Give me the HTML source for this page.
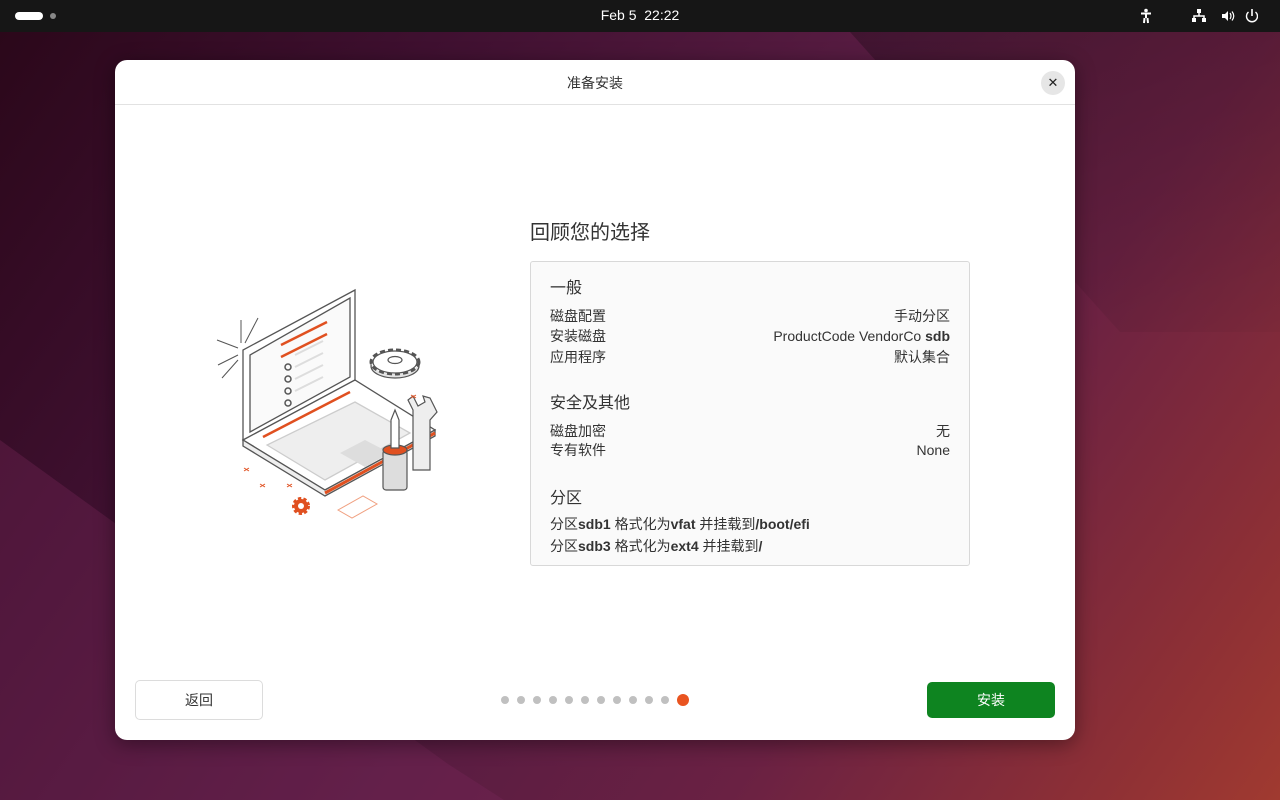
<!DOCTYPE html>
<html><head><meta charset="utf-8"><style>
*{margin:0;padding:0;box-sizing:border-box}
body{width:1280px;height:800px;overflow:hidden;font-family:"Liberation Sans","Noto Sans CJK SC",sans-serif;position:relative;
background:linear-gradient(125deg,#2a0719 0%,#3f1030 25%,#581c42 50%,#6a2143 70%,#8e3035 90%,#a03a30 100%)}
.bg1{position:absolute;left:850px;top:32px;width:600px;height:300px;background:linear-gradient(160deg,rgba(0,0,0,0.25),rgba(0,0,0,0));clip-path:polygon(0 0,100% 0,100% 100%,45% 100%)}
.bg2{position:absolute;left:0;top:440px;width:560px;height:360px;background:rgba(120,40,90,0.35);clip-path:polygon(0 0,80% 90%,90% 100%,0 100%)}
.top{position:absolute;left:0;top:0;width:1280px;height:32px;background:#161616;color:#fff;font-size:14px}
.dlg{position:absolute;left:115px;top:60px;width:960px;height:680px;background:#fff;border-radius:12px;box-shadow:0 4px 20px rgba(0,0,0,.4)}
.hdr{height:45px;border-bottom:1px solid #e2e2e2;text-align:center;line-height:46px;font-size:14px;color:#333}
.close{position:absolute;right:10px;top:11px;width:24px;height:24px;border-radius:12px;background:#e6e6e6;text-align:center;line-height:23px;font-size:13px;color:#222}
h2{position:absolute;left:415px;top:156px;font-size:20px;font-weight:normal;color:#333}
.card{position:absolute;left:415px;top:201px;width:440px;height:305px;background:#fafafa;border:1px solid #d8d8d8;border-radius:3px;padding:0 19px;color:#333;font-size:14px}
.sec{font-size:16px;position:absolute;left:19px}
.row{position:absolute;left:19px;right:19px;display:flex;justify-content:space-between;line-height:20px}
.row b{font-weight:bold}
.btn{position:absolute;top:620px;height:40px;border-radius:5px;font-size:14px;text-align:center;line-height:38px}
.dots{position:absolute;left:386px;top:634px;display:flex;gap:8px;align-items:center}
.dots i{width:8px;height:8px;border-radius:4px;background:#c0c0c0;display:block}
</style></head><body>
<div class="bg1"></div><div class="bg2"></div>
<div class="top">
 <div style="position:absolute;left:15px;top:12px;width:28px;height:8px;border-radius:4px;background:#fff"></div>
 <div style="position:absolute;left:50px;top:13px;width:6px;height:6px;border-radius:3px;background:#888"></div>
 <div style="position:absolute;left:0;width:1280px;text-align:center;top:7px">Feb 5&nbsp; 22:22</div>
 <svg style="position:absolute;left:1138px;top:8px" width="120" height="16" viewBox="0 0 120 16" fill="#fff" stroke="#fff">
  <circle cx="8" cy="2.5" r="1.8" stroke="none"/><path d="M3 5.5h10M8 5v5M6.5 10l-.5 5M9.5 10l.5 5" stroke-width="2" fill="none"/>
  <rect x="59" y="1" width="4" height="4" stroke="none"/><rect x="54" y="10" width="4" height="4" stroke="none"/><rect x="64" y="10" width="4" height="4" stroke="none"/><path d="M61 5v3M56 10V8h10v2" fill="none" stroke-width="1.5"/>
  <path d="M84 6h3l3-3v10l-3-3h-3z" stroke="none"/><path d="M92 5q2 3 0 6M94 3.5q3.5 4.5 0 9" fill="none" stroke-width="1.2"/>
  <path d="M114 1v7" stroke-width="1.6"/><path d="M110.5 4a5.5 5.5 0 1 0 7 0" fill="none" stroke-width="1.4"/>
 </svg>
</div>
<div class="dlg">
 <div class="hdr">准备安装</div>
 <div class="close">✕</div>
 <svg style="position:absolute;left:90px;top:220px" width="250" height="240" viewBox="200 280 250 240">
  <g stroke="#555" stroke-width="1.3" fill="#fff">
   <path d="M350 290 L350 380 L238 440 L238 350 Z"/>
   <path d="M345 298 L345 377 L245 432 L245 355 Z" fill="#fafafa"/>
   <path d="M238 440 L320 490 L430 430 L350 380 Z"/>
   <path d="M238 440 L238 446 L320 496 L430 436 L430 430 L320 490 Z" fill="#eee"/>
   <path d="M320 493 L430 433" stroke="#e05020" stroke-width="3"/>
   <path d="M262 445 L320 480 L405 433 L350 402 Z" fill="#eee" stroke="#ccc"/>
   <path d="M335 453 L360 467 L385 453 L360 440 Z" fill="#ddd" stroke="none"/>
  </g>
  <g stroke="#e05020" stroke-width="2.5"><path d="M276 345 L322 322M276 357 L322 334M258 437 L345 392"/></g>
  <g stroke="#ddd" stroke-width="2"><path d="M290 355 L318 341M290 367 L318 353M290 379 L318 365M290 391 L318 377"/></g>
  <g fill="none" stroke="#555" stroke-width="1.5"><circle cx="283" cy="367" r="3"/><circle cx="283" cy="379" r="3"/><circle cx="283" cy="391" r="3"/><circle cx="283" cy="403" r="3"/></g>
  <g stroke="#555" stroke-width="1"><path d="M236 343 L236 320M240 343 L253 318M233 348 L212 340M233 355 L213 365M233 360 L217 378"/></g>
  <g stroke="#555" fill="#fff" stroke-width="1.2">
   <ellipse cx="390" cy="366" rx="24" ry="12" fill="#e4e4e4"/>
   <ellipse cx="390" cy="362" rx="24" ry="12" stroke-dasharray="5 3" stroke-width="3"/>
   <ellipse cx="390" cy="362" rx="22" ry="11"/><ellipse cx="390" cy="360" rx="7" ry="3.5"/>
   <rect x="378" y="450" width="24" height="40" rx="3" fill="#ddd"/><ellipse cx="390" cy="450" rx="12" ry="5" fill="#e05020"/>
   <path d="M386 448 L386 420 L390 410 L394 420 L394 448 Z"/>
   <path d="M408 470 L408 410 L403 400 L408 396 L413 406 L420 402 L418 396 L425 398 L432 412 L425 420 L425 470 Z" fill="#eee"/>
  </g>
  <circle cx="296" cy="506" r="7" fill="#e05020" stroke="#e05020" stroke-width="4" stroke-dasharray="3 2"/><circle cx="296" cy="506" r="3" fill="#fff"/>
  <path d="M333 510 L358 496 L372 504 L347 518 Z" fill="none" stroke="#f0a080"/>
  <g stroke="#e05020" stroke-width="1"><path d="M239 468l5 3M244 468l-5 3M255 484l5 3M260 484l-5 3M282 484l5 3M287 484l-5 3M406 395l5 3M411 395l-5 3"/></g>
 </svg>
 <h2>回顾您的选择</h2>
 <div class="card">
  <div class="sec" style="top:12px">一般</div>
  <div class="row" style="top:44px"><span>磁盘配置</span><span>手动分区</span></div>
  <div class="row" style="top:64px"><span>安装磁盘</span><span>ProductCode VendorCo <b>sdb</b></span></div>
  <div class="row" style="top:85px"><span>应用程序</span><span>默认集合</span></div>
  <div class="sec" style="top:127px">安全及其他</div>
  <div class="row" style="top:159px"><span>磁盘加密</span><span>无</span></div>
  <div class="row" style="top:178px"><span>专有软件</span><span>None</span></div>
  <div class="sec" style="top:222px">分区</div>
  <div class="row" style="top:252px;justify-content:flex-start"><span>分区<b>sdb1</b> 格式化为<b>vfat</b> 并挂载到<b>/boot/efi</b></span></div>
  <div class="row" style="top:274px;justify-content:flex-start"><span>分区<b>sdb3</b> 格式化为<b>ext4</b> 并挂载到<b>/</b></span></div>
 </div>
 <div class="btn" style="left:20px;width:128px;border:1px solid #dcdcdc;color:#333">返回</div>
 <div class="dots"><i></i><i></i><i></i><i></i><i></i><i></i><i></i><i></i><i></i><i></i><i></i><i style="width:12px;height:12px;border-radius:6px;background:#e95420"></i></div>
 <div class="btn" style="left:812px;top:622px;height:36px;line-height:36px;width:128px;background:#0e8420;color:#fff">安装</div>
</div>
</body></html>
